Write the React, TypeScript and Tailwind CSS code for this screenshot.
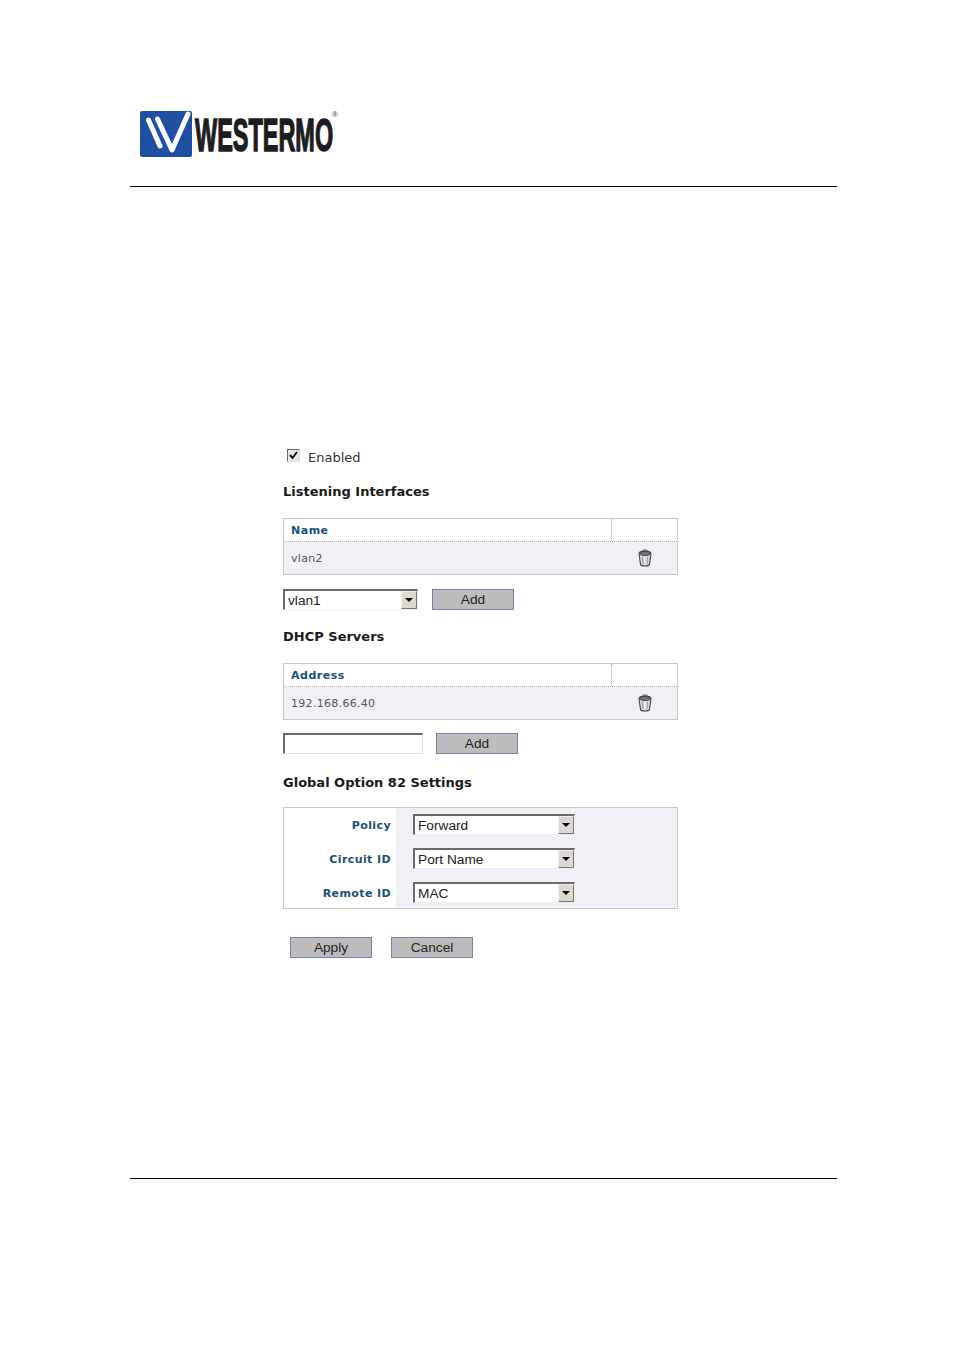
import { ReactNode } from 'react'

const verdana = 'font-["DejaVu_Sans",sans-serif]'
const arial = 'font-["Liberation_Sans",Arial,sans-serif]'

function Logo() {
  return (
    <div className="flex h-[47px] items-start pl-[10px]">
      <svg width="52" height="46" viewBox="0 0 52 46" className="mt-[1px] shrink-0">
        <path d="M2 0H50Q52 0 52 2V44Q52 46 50 46H2Q0 46 0 44V2Q0 0 2 0Z" fill="#1f4fa3" />
        <path d="M8.5 9L20 35M17.5 8L32 39L48 3" fill="none" stroke="#fff" strokeWidth="5" strokeLinecap="round" strokeLinejoin="round" />
      </svg>
      <div className="relative">
        <span className={`${arial} ml-[3px] mt-[9px] block origin-left scale-x-[0.51] text-[46px] leading-[33px] font-bold uppercase text-[#1d1d1f] [-webkit-text-stroke:1.5px_#1d1d1f]`}>
          westermo
        </span>
        <span className={`${arial} absolute left-[140px] top-[1px] text-[8px] leading-[8px] text-[#444]`}>®</span>
      </div>
    </div>
  )
}

function Heading({ children, className }: { children: ReactNode; className: string }) {
  return <h2 className={`${verdana} text-[13px] leading-[16px] font-bold text-[#1a1a1a] ${className}`}>{children}</h2>
}

function Trash() {
  return (
    <svg width="16" height="18" viewBox="0 0 16 18">
      <path d="M2 4.5C2 2.8 5 2 8 2S14 2.8 14 4.5L12.5 15.5C12.2 16.6 10 17 8 17S3.8 16.6 3.5 15.5Z" fill="#d8d8d8" stroke="#444" strokeWidth="1.1" />
      <ellipse cx="8" cy="4.5" rx="5.5" ry="2" fill="#777" stroke="#333" strokeWidth="0.8" />
      <path d="M6 2V1H10V2" fill="none" stroke="#555" strokeWidth="0.9" />
      <path d="M5.5 8L6 15M10.5 8L10 15" stroke="#999" strokeWidth="1" />
      <path d="M8 8V15.5" stroke="#f5f5f5" strokeWidth="1.4" />
    </svg>
  )
}

function ListTable({ title, value }: { title: string; value: string }) {
  return (
    <div className="border border-[#c8c8c8] bg-white">
      <div className="flex h-[23px] border-b border-dotted border-[#aaa]">
        <div className={`${verdana} flex-1 border-r border-dotted border-[#aaa] pl-[7px] pt-[5px] text-[11px] leading-[13px] font-bold tracking-[0.5px] text-[#17507a]`}>
          {title}
        </div>
        <div className="w-[65px]" />
      </div>
      <div className="flex h-[32px] items-center bg-[#f0f1f6]">
        <div className={`${verdana} flex-1 pl-[7px] pt-[3px] text-[11px] tracking-[0.3px] text-[#555]`}>{value}</div>
        <div className="flex w-[65px] justify-center">
          <Trash />
        </div>
      </div>
    </div>
  )
}

function Select({ value, width }: { value: string; width: string }) {
  return (
    <div className={`${width} flex h-[21px] border-2 border-r border-b border-r-[#eee] border-b-[#eee] border-t-[#6a6a6a] border-l-[#6a6a6a] bg-white`}>
      <span className={`${arial} flex-1 pl-[3px] text-[13.7px] leading-[19px] text-[#222]`}>{value}</span>
      <span className="flex h-[18px] w-[16px] items-center justify-center border border-[#777] border-t-[#eee] border-l-[#eee] bg-[#dcd8cf]">
        <span className="h-0 w-0 border-x-[4px] border-t-[4px] border-x-transparent border-t-black" />
      </span>
    </div>
  )
}

function Btn({ label }: { label: string }) {
  return (
    <button className={`${arial} h-[21px] w-[82px] border border-[#6f83a6] bg-[#bcbcbc] text-[13.7px] leading-[18px] text-[#222]`}>
      {label}
    </button>
  )
}

function OptionRow({ label, value }: { label: string; value: string }) {
  return (
    <div className="flex h-[34px] shrink-0 items-start">
      <div className={`${verdana} w-[112px] self-stretch bg-white pr-[5px] pt-[1px] text-right text-[11px] leading-[34px] font-bold tracking-[0.4px] text-[#17507a]`}>
        {label}
      </div>
      <div className="pl-[17px] pt-[6px]">
        <Select value={value} width="w-[162px]" />
      </div>
    </div>
  )
}

export default function App() {
  return (
    <div className="flex h-[1350px] w-[954px] flex-col bg-white px-[130px] pt-[110px] pr-[117px]">
      <Logo />
      <div className="mt-[29px] h-px bg-black" />

      <div className="ml-[153px] h-[991px] w-[395px]">
        <label className="mt-[263px] flex h-[16px] items-center pl-[4px]">
          <span className="mt-[-5px] flex h-[13px] w-[13px] items-center justify-center border border-[#666] border-r-[#ddd] border-b-[#ddd] bg-[#e8e8e8]">
            <svg width="9" height="9" viewBox="0 0 9 9">
              <path d="M1 4L3.5 7L8 1" fill="none" stroke="#111" strokeWidth="2" />
            </svg>
          </span>
          <span className={`${verdana} ml-[8px] text-[13px] leading-[16px] text-[#333]`}>Enabled</span>
        </label>

        <Heading className="mt-[18px]">Listening Interfaces</Heading>
        <div className="mt-[18px]">
          <ListTable title="Name" value="vlan2" />
        </div>
        <div className="mt-[14px] flex items-start gap-[14px]">
          <Select value="vlan1" width="w-[135px]" />
          <Btn label="Add" />
        </div>

        <Heading className="mt-[19px]">DHCP Servers</Heading>
        <div className="mt-[18px]">
          <ListTable title="Address" value="192.168.66.40" />
        </div>
        <div className="mt-[13px] flex items-start gap-[13px]">
          <div className="h-[21px] w-[140px] border-2 border-r border-b border-r-[#ddd] border-b-[#ddd] border-t-[#6a6a6a] border-l-[#6a6a6a] bg-white" />
          <Btn label="Add" />
        </div>

        <Heading className="mt-[21px]">Global Option 82 Settings</Heading>
        <div className="mt-[16px] flex h-[102px] flex-col overflow-hidden border border-[#c8c8c8] bg-[#f0f1f6]">
          <OptionRow label="Policy" value="Forward" />
          <OptionRow label="Circuit ID" value="Port Name" />
          <OptionRow label="Remote ID" value="MAC" />
        </div>

        <div className="mt-[28px] flex gap-[19px] pl-[7px]">
          <Btn label="Apply" />
          <Btn label="Cancel" />
        </div>
      </div>

      <div className="h-px bg-black" />
    </div>
  )
}
